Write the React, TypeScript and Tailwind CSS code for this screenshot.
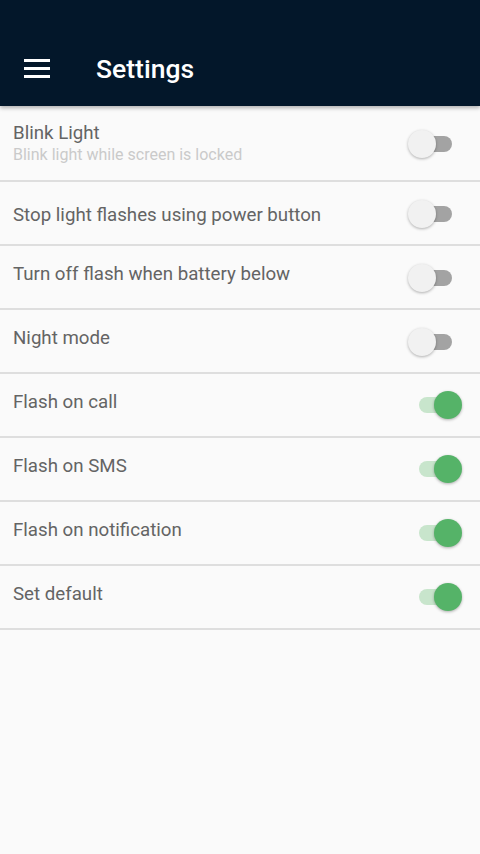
import React from 'react';

type Row = { title: string; subtitle?: string; on: boolean };

const rows: Row[] = [
  { title: 'Blink Light', subtitle: 'Blink light while screen is locked', on: false },
  { title: 'Stop light flashes using power button', on: false },
  { title: 'Turn off flash when battery below', on: false },
  { title: 'Night mode', on: false },
  { title: 'Flash on call', on: true },
  { title: 'Flash on SMS', on: true },
  { title: 'Flash on notification', on: true },
  { title: 'Set default', on: true },
];

function Toggle({ on }: { on: boolean }) {
  if (on) {
    return (
      <div className="relative w-[44px] h-[28px] mr-[18px]">
        <div className="absolute left-[1px] top-[6px] w-[40px] h-[16px] rounded-full bg-[#c8e5cc]" />
        <div className="absolute right-0 top-0 w-[28px] h-[28px] rounded-full bg-[#55b368] shadow-[0_1px_3px_rgba(0,0,0,0.3)]" />
      </div>
    );
  }
  return (
    <div className="relative w-[44px] h-[28px] mr-[28px]">
      <div className="absolute right-0 top-[6px] w-[40px] h-[16px] rounded-full bg-[#a3a3a3]" />
      <div className="absolute left-0 top-0 w-[28px] h-[28px] rounded-full bg-[#f1f1f1] shadow-[0_1px_3px_rgba(0,0,0,0.3)]" />
    </div>
  );
}

export default function App() {
  return (
    <div className="w-[480px] h-[854px] bg-[#fafafa] font-['Roboto',sans-serif]">
      <div className="bg-[#03172a] h-[106px] pt-[32px] shadow-[0_2px_4px_rgba(0,0,0,0.3)] relative z-10">
        <div className="flex items-center h-[74px]">
          <div className="ml-[24px] w-[26px] flex flex-col gap-[5px] -mt-[2px]">
            <div className="h-[3px] bg-white" />
            <div className="h-[3px] bg-white" />
            <div className="h-[3px] bg-white" />
          </div>
          <div className="ml-[46px] text-white text-[26.5px] font-medium">Settings</div>
        </div>
      </div>
      <div>
        {rows.map((r, i) => (
          <div
            key={i}
            className={`flex items-start justify-between border-b-2 border-[#dedede] ${
              r.subtitle ? 'h-[76px] pt-[15px]' : i === 1 ? 'h-[64px] pt-[21px]' : 'h-[64px] pt-[16px]'
            }`}
          >
            <div className="pl-[13px]">
              <div className="text-[18.7px] leading-[24px] text-[#646464]">{r.title}</div>
              {r.subtitle && (
                <div className="text-[16px] leading-[20px] text-[#cacaca]">{r.subtitle}</div>
              )}
            </div>
            <div className={r.subtitle ? 'mt-[9px]' : i === 1 ? 'mt-[-3px]' : r.on ? 'mt-[1px]' : 'mt-[2px]'}>
              <Toggle on={r.on} />
            </div>
          </div>
        ))}
      </div>
    </div>
  );
}
